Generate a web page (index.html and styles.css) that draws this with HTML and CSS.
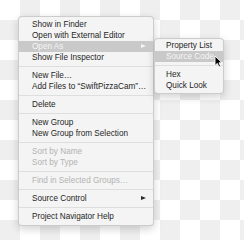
FILE: index.html
```html
<!DOCTYPE html>
<html lang="en">
<head>
    <meta charset="UTF-8">
    <meta name="viewport" content="width=device-width, initial-scale=1.0">
    <title>Project Navigator Menu</title>
    <link rel="stylesheet" href="styles.css">
</head>
<body>
    <div class="stage">
        <ul class="menu main-menu">
            <li class="item">Show in Finder</li>
            <li class="item">Open with External Editor</li>
            <li class="item active has-sub">Open As</li>
            <li class="item">Show File Inspector</li>
            <li class="sep"></li>
            <li class="item">New File…</li>
            <li class="item">Add Files to “SwiftPizzaCam”…</li>
            <li class="sep"></li>
            <li class="item">Delete</li>
            <li class="sep"></li>
            <li class="item">New Group</li>
            <li class="item">New Group from Selection</li>
            <li class="sep"></li>
            <li class="item disabled">Sort by Name</li>
            <li class="item disabled">Sort by Type</li>
            <li class="sep"></li>
            <li class="item disabled">Find in Selected Groups…</li>
            <li class="sep"></li>
            <li class="item has-sub">Source Control</li>
            <li class="sep"></li>
            <li class="item">Project Navigator Help</li>
        </ul>

        <ul class="menu sub-menu">
            <li class="item">Property List</li>
            <li class="item active">Source Code</li>
            <li class="sep"></li>
            <li class="item">Hex</li>
            <li class="item">Quick Look</li>
        </ul>

        <!-- mouse pointer over "Source Code" -->
        <svg class="cursor" width="9" height="13" viewBox="0 0 9 13">
            <path d="M1 1 L1 10.5 L3.3 8.4 L5 12 L6.6 11.3 L5 7.8 L8 7.8 Z" fill="#000" stroke="#fff" stroke-width="0.9" stroke-linejoin="round"/>
        </svg>
    </div>
</body>
</html>
```

FILE: styles.css
```css
html, body {
    margin: 0;
    padding: 0;
}

body {
    width: 244px;
    height: 240px;
    font-family: "Liberation Sans", Arial, sans-serif;
    font-size: 8.2px;
    background: repeating-conic-gradient(#efefef 0 25%, #fff 0 50%) 0 0 / 40px 40px;
    overflow: hidden;
}

.stage {
    position: relative;
    display: flex;
    align-items: flex-start;
    padding: 16px 0 0 18px;
}

.menu {
    list-style: none;
    margin: 0;
    background-color: #f4f4f4;
    border: 1px solid rgba(0, 0, 0, 0.16);
    border-radius: 4px;
    box-shadow: 0 3px 8px rgba(0, 0, 0, 0.18);
}

.main-menu {
    width: 134px;
    padding: 2px 0 3px;
}

.sub-menu {
    width: 68px;
    margin-top: 22px;
    padding: 1px 0 2px;
}

.item {
    position: relative;
    height: 11px;
    line-height: 11px;
    padding-left: 13px;
    color: #1f1f1f;
    white-space: nowrap;
}

.sub-menu .item {
    padding-left: 11px;
}

.item.disabled {
    color: #b3b3b3;
}

.item.active {
    background-color: #c9c9c9;
    color: #f6f6f6;
}

.item.has-sub::after {
    content: "";
    position: absolute;
    right: 7px;
    top: 3px;
    border-left: 5px solid #2a2a2a;
    border-top: 2.5px solid transparent;
    border-bottom: 2.5px solid transparent;
}

.item.active.has-sub::after {
    border-left-color: #f6f6f6;
}

.sep {
    height: 1px;
    margin: 3px 0;
    background-color: #dedede;
}

.cursor {
    position: absolute;
    left: 214px;
    top: 55px;
}
```
